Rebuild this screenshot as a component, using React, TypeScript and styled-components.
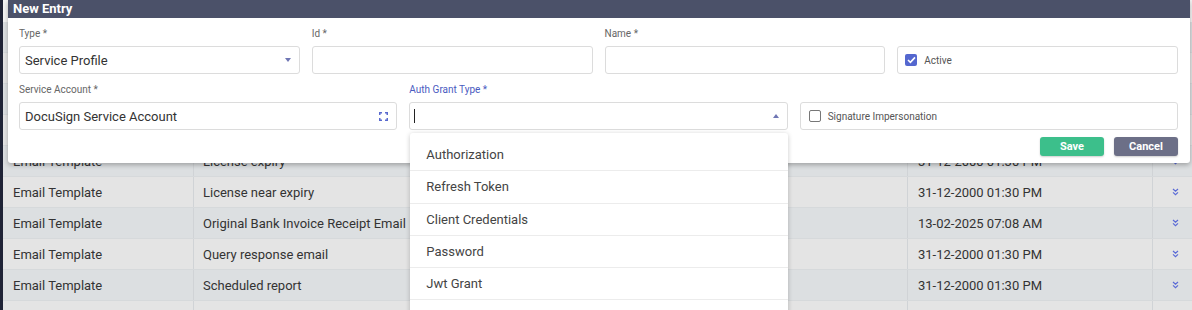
import React from 'react';
import styled, { createGlobalStyle } from 'styled-components';

const GlobalStyle = createGlobalStyle`
  html, body {
    margin: 0;
    padding: 0;
    background: #f3f3f3;
    font-family: Roboto, "Liberation Sans", Arial, sans-serif;
  }
  * {
    box-sizing: border-box;
  }
`;

const Page = styled.div`
  position: relative;
  display: flex;
  width: 1192px;
  height: 310px;
  overflow: hidden;
`;

const Sidebar = styled.div`
  width: 3px;
  flex: none;
  background: #1f2336;
`;

const Main = styled.div`
  width: 1189px;
  flex: none;
  padding-top: 22px;
  background: #f3f3f3;
`;

const Row = styled.div<{ $dark: boolean }>`
  display: grid;
  grid-template-columns: 191px 410px 304px 245px 39px;
  height: 31px;
  border-bottom: 1px solid #d6d9db;
  background: ${(p) => (p.$dark ? '#dcdfe1' : '#e4e4e4')};
`;

const Cell = styled.div<{ $pad?: number; $center?: boolean }>`
  display: flex;
  align-items: center;
  justify-content: ${(p) => (p.$center ? 'center' : 'flex-start')};
  min-width: 0;
  padding-left: ${(p) => p.$pad ?? 10}px;
  border-right: 1px solid #d0d3d6;
  font-size: 13px;
  color: #333;
  white-space: nowrap;
  overflow: hidden;

  &:last-child {
    border-right: 0;
  }
`;

const Modal = styled.div`
  position: absolute;
  left: 8px;
  top: 0;
  width: 1182px;
  background: #fff;
  border-radius: 0 0 3px 3px;
  box-shadow: 0 2px 5px rgba(0, 0, 0, 0.28);
`;

const Header = styled.div`
  height: 18px;
  line-height: 18px;
  padding-left: 5px;
  background: #4b5169;
  color: #fff;
  font-size: 13px;
  font-weight: 700;
`;

const Body = styled.div`
  padding: 10px 12px 7px 11px;
`;

const FieldRow = styled.div<{ $cols: number }>`
  display: grid;
  grid-template-columns: repeat(${(p) => p.$cols}, 1fr);
  column-gap: 12px;
  & + & {
    margin-top: 10px;
  }
`;

const Field = styled.div`
  position: relative;
  display: flex;
  flex-direction: column;
`;

const Label = styled.div<{ $active?: boolean }>`
  height: 12px;
  line-height: 12px;
  margin-bottom: 6px;
  font-size: 10px;
  color: ${(p) => (p.$active ? '#4a5bbf' : '#666')};
`;

const InputBox = styled.div`
  display: flex;
  align-items: center;
  height: 28px;
  padding: 0 8px 0 5px;
  border: 1px solid #dcdcdc;
  border-radius: 3px;
  font-size: 13px;
  color: #333;
`;

const Value = styled.span`
  flex: 1;
`;

const Cursor = styled.span`
  display: block;
  width: 1px;
  height: 14px;
  background: #222;
  margin-left: -1px;
`;

const Caret = styled.span<{ $up?: boolean }>`
  width: 0;
  height: 0;
  border-left: 3.5px solid transparent;
  border-right: 3.5px solid transparent;
  ${(p) =>
    p.$up
      ? 'border-bottom: 4px solid #6f76b4;'
      : 'border-top: 4px solid #6f76b4;'}
`;

const CheckField = styled(InputBox)<{ $indent: number }>`
  padding-left: ${(p) => p.$indent}px;
  gap: 7px;
  font-size: 10px;
  color: #555;
`;

const CheckBox = styled.span<{ $checked?: boolean }>`
  display: flex;
  align-items: center;
  justify-content: center;
  width: 12px;
  height: 12px;
  border-radius: 2px;
  background: ${(p) => (p.$checked ? '#5467cf' : '#fff')};
  border: ${(p) => (p.$checked ? '0' : '1px solid #777')};
`;

const Actions = styled.div`
  display: flex;
  justify-content: flex-end;
  gap: 10px;
  margin-top: 7px;
`;

const Button = styled.button<{ $variant: 'save' | 'cancel' }>`
  width: 64px;
  height: 19px;
  padding: 0;
  border: 0;
  border-radius: 3px;
  font-family: Roboto, "Liberation Sans", Arial, sans-serif;
  font-size: 11px;
  font-weight: 700;
  color: #fff;
  background: ${(p) => (p.$variant === 'save' ? '#3cbf8b' : '#6c6f87')};
  box-shadow: 0 1px 2px rgba(0, 0, 0, 0.2);
`;

const Dropdown = styled.div`
  position: absolute;
  top: calc(100% + 3px);
  left: 1px;
  right: 0;
  padding: 6px 0 24px;
  background: #fff;
  box-shadow: 0 1px 5px rgba(0, 0, 0, 0.22);
  border-radius: 3px;
  z-index: 5;
`;

const Option = styled.div`
  height: 32.3px;
  display: flex;
  align-items: center;
  padding-left: 16px;
  border-bottom: 1px solid #ececec;
  font-size: 13px;
  color: #444;
`;

const rows = [
  ['Email Template', 'Account created', '31-12-2000 01:30 PM'],
  ['Email Template', 'Account locked', '31-12-2000 01:30 PM'],
  ['Email Template', 'Forgot password', '31-12-2000 01:30 PM'],
  ['Email Template', 'Invoice generated', '31-12-2000 01:30 PM'],
  ['Email Template', 'License expiry', '31-12-2000 01:30 PM'],
  ['Email Template', 'License near expiry', '31-12-2000 01:30 PM'],
  ['Email Template', 'Original Bank Invoice Receipt Email', '13-02-2025 07:08 AM'],
  ['Email Template', 'Query response email', '31-12-2000 01:30 PM'],
  ['Email Template', 'Scheduled report', '31-12-2000 01:30 PM'],
  ['Email Template', 'Welcome email', '31-12-2000 01:30 PM'],
];

const grantTypes = [
  'Authorization',
  'Refresh Token',
  'Client Credentials',
  'Password',
  'Jwt Grant',
];

const ChevronsDown = () => (
  <svg width="7" height="8" viewBox="0 0 7 8" fill="none">
    <path d="M1 1 L3.5 3.3 L6 1 M1 4.4 L3.5 6.7 L6 4.4" stroke="#5b6bd6" strokeWidth="1.2" />
  </svg>
);

const ExpandIcon = () => (
  <svg width="9" height="9" viewBox="0 0 9 9" fill="none">
    <path
      d="M0.75 3 V0.75 H3 M6 0.75 H8.25 V3 M8.25 6 V8.25 H6 M3 8.25 H0.75 V6"
      stroke="#5a6acf"
      strokeWidth="1.5"
    />
  </svg>
);

const Check = () => (
  <svg width="9" height="8" viewBox="0 0 9 8" fill="none">
    <path d="M1 4 L3.4 6.3 L8 1.4" stroke="#fff" strokeWidth="1.6" />
  </svg>
);

export default function App() {
  return (
    <>
      <GlobalStyle />
      <Page>
        <Sidebar />
        <Main>
          {rows.map((r, i) => (
            <Row key={i} $dark={i % 2 === 0}>
              <Cell>{r[0]}</Cell>
              <Cell $pad={9}>{r[1]}</Cell>
              <Cell />
              <Cell>{r[2]}</Cell>
              <Cell $pad={5} $center>
                <ChevronsDown />
              </Cell>
            </Row>
          ))}
        </Main>

        <Modal>
          <Header>New Entry</Header>
          <Body>
            <FieldRow $cols={4}>
              <Field>
                <Label>Type *</Label>
                <InputBox>
                  <Value>Service Profile</Value>
                  <Caret />
                </InputBox>
              </Field>
              <Field>
                <Label>Id *</Label>
                <InputBox />
              </Field>
              <Field>
                <Label>Name *</Label>
                <InputBox />
              </Field>
              <Field>
                <Label />
                <CheckField $indent={7}>
                  <CheckBox $checked>
                    <Check />
                  </CheckBox>
                  Active
                </CheckField>
              </Field>
            </FieldRow>

            <FieldRow $cols={3}>
              <Field>
                <Label>Service Account *</Label>
                <InputBox>
                  <Value>DocuSign Service Account</Value>
                  <ExpandIcon />
                </InputBox>
              </Field>
              <Field>
                <Label $active>Auth Grant Type *</Label>
                <InputBox>
                  <Value>
                    <Cursor />
                  </Value>
                  <Caret $up />
                </InputBox>
                <Dropdown>
                  {grantTypes.map((g) => (
                    <Option key={g}>{g}</Option>
                  ))}
                </Dropdown>
              </Field>
              <Field>
                <Label />
                <CheckField $indent={8}>
                  <CheckBox />
                  Signature Impersonation
                </CheckField>
              </Field>
            </FieldRow>

            <Actions>
              <Button $variant="save">Save</Button>
              <Button $variant="cancel">Cancel</Button>
            </Actions>
          </Body>
        </Modal>
      </Page>
    </>
  );
}
